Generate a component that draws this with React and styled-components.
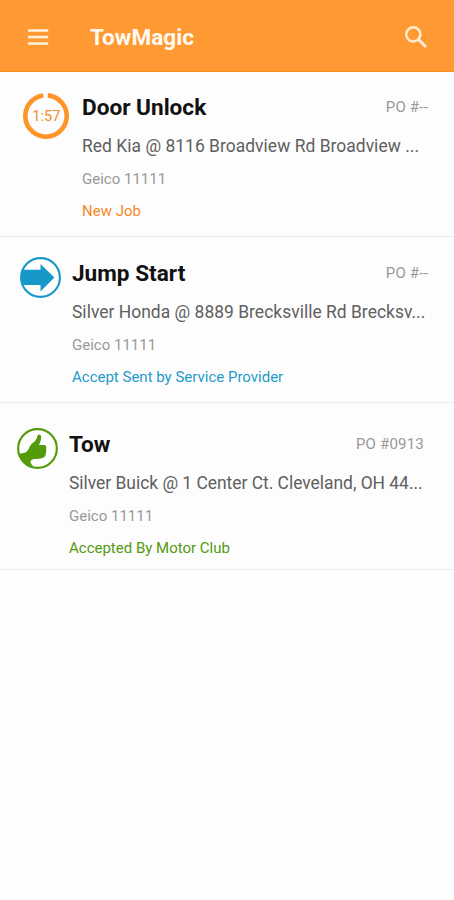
import React from "react";
import styled, { createGlobalStyle } from "styled-components";

const jobs = [
  {
    id: 1,
    icon: <TimerIcon time="1:57" />,
    title: "Door Unlock",
    po: "PO #--",
    address: "Red Kia @ 8116 Broadview Rd Broadview ...",
    club: "Geico 11111",
    status: "New Job",
    color: "#f5882b",
    height: 165,
    top: 20,
    left: 23,
    gap: 13,
    right: 26,
    iconTop: 1,
    spacing: 0.03,
  },
  {
    id: 2,
    icon: <ArrowIcon />,
    title: "Jump Start",
    po: "PO #--",
    address: "Silver Honda @ 8889 Brecksville Rd Brecksv...",
    club: "Geico 11111",
    status: "Accept Sent by Service Provider",
    color: "#1e9bc9",
    height: 166,
    top: 21,
    left: 20,
    gap: 11,
    right: 26,
    iconTop: -1,
    spacing: 0.02,
  },
  {
    id: 3,
    icon: <ThumbIcon />,
    title: "Tow",
    po: "PO #0913",
    address: "Silver Buick @ 1 Center Ct. Cleveland, OH 44...",
    club: "Geico 11111",
    status: "Accepted By Motor Club",
    color: "#549a12",
    height: 167,
    top: 26,
    left: 17,
    gap: 11,
    right: 30,
    iconTop: -1,
    spacing: -0.02,
  },
];

function TimerIcon({ time }) {
  return (
    <svg width="46" height="46" viewBox="0 0 46 46">
      <circle
        cx="23"
        cy="23"
        r="20.7"
        fill="none"
        stroke="#ff9528"
        strokeWidth="4.6"
        pathLength="100"
        strokeDasharray="96.4 3.6"
        transform="rotate(-85 23 23)"
      />
      <text
        x="23.3"
        y="28.4"
        textAnchor="middle"
        fontSize="14.6"
        fill="#f5892c"
      >
        {time}
      </text>
    </svg>
  );
}

function ArrowIcon() {
  return (
    <svg width="41" height="41" viewBox="0 0 41 41">
      <circle cx="20.5" cy="20.5" r="19.4" fill="#fff" stroke="#1799c8" strokeWidth="2.1" />
      <path d="M2 12.8h18.5V7L34.4 20.5 20.5 34.5V28H2.6L1 20z" fill="#1799c8" />
    </svg>
  );
}

function ThumbIcon() {
  return (
    <svg width="41" height="41" viewBox="0 0 123 123">
      <circle cx="61.5" cy="61.5" r="58" fill="#fff" stroke="#539b0b" strokeWidth="6.4" />
      <path
        d="M4 77 Q18 77 27 73 Q34 68 39 54 Q43 46 52 41 Q60 34 62 22 Q67 17 72 23 Q74 34 66 51 L82 51 Q88 52 88 58 Q88 72 85 83 Q82 90 73 91 Q62 94 50 93 Q42 95 40 101 Q41 108 50 116 Q14 110 4 77Z"
        fill="#539b0b"
      />
    </svg>
  );
}

function App() {
  return (
    <>
      <GlobalStyle />
      <Header>
        <svg width="22" height="18" viewBox="0 0 22 18">
          <path d="M1 2.5h20.2M1 9h20.2M1 15.5h20.2" stroke="#fff3e0" strokeWidth="2.6" />
        </svg>
        <h1>TowMagic</h1>
        <svg width="24" height="24" viewBox="0 0 24 24" fill="none" stroke="#ffecd2">
          <circle cx="9.3" cy="9.3" r="7.1" strokeWidth="2.5" />
          <path d="M14.4 14.4l7.6 7.6" strokeWidth="2.9" />
        </svg>
      </Header>
      <JobList>
        {jobs.map((job) => (
          <JobRow key={job.id} $job={job}>
            <IconSlot $top={job.iconTop}>{job.icon}</IconSlot>
            <Details>
              <TitleLine>
                <h2>{job.title}</h2>
                <span>{job.po}</span>
              </TitleLine>
              <Address $spacing={job.spacing}>{job.address}</Address>
              <Club>{job.club}</Club>
              <Status $color={job.color}>{job.status}</Status>
            </Details>
          </JobRow>
        ))}
      </JobList>
    </>
  );
}

const GlobalStyle = createGlobalStyle`
  * {
    box-sizing: border-box;
  }

  body {
    margin: 0;
    min-height: 900px;
    background: #fefefe;
    font-family: Roboto, sans-serif;
  }

  svg {
    display: block;
    flex-shrink: 0;
  }
`;

const Header = styled.header`
  display: flex;
  align-items: center;
  height: 72px;
  padding: 2px 26px 0 27px;
  background: #ff9933;
  border-bottom: 1px solid #ff8f1c;

  h1 {
    flex: 1;
    margin: 3px 0 0 41px;
    color: #fffaf0;
    font-size: 22.6px;
    font-weight: 700;
    line-height: 30px;
  }
`;

const JobList = styled.ul`
  margin: 0;
  padding: 0;
  list-style: none;
`;

const JobRow = styled.li`
  display: flex;
  gap: ${({ $job }) => $job.gap}px;
  height: ${({ $job }) => $job.height}px;
  padding: ${({ $job }) => `${$job.top}px ${$job.right}px 0 ${$job.left}px`};
  background: #fdfdfd;
  border-bottom: 1px solid #ebebeb;
`;

const IconSlot = styled.div`
  margin-top: ${({ $top }) => $top}px;
`;

const Details = styled.div`
  flex: 1;
  min-width: 0;
  white-space: nowrap;
`;

const TitleLine = styled.div`
  display: flex;
  justify-content: space-between;
  align-items: center;
  height: 30px;

  h2 {
    margin: 2px 0 0;
    color: #111;
    font-size: 22.6px;
    font-weight: 700;
    line-height: 30px;
  }

  span {
    color: #999;
    font-size: 15px;
    line-height: 30px;
    letter-spacing: 0.2px;
  }
`;

const Address = styled.div`
  margin-top: 14px;
  color: #606060;
  font-size: 17.45px;
  line-height: 20px;
  letter-spacing: ${({ $spacing }) => $spacing}px;
`;

const Club = styled.div`
  margin-top: 14px;
  color: #999;
  font-size: 15px;
  line-height: 18px;
`;

const Status = styled.div`
  margin-top: 14px;
  color: ${({ $color }) => $color};
  font-size: 15px;
  line-height: 18px;
`;

export default App;
